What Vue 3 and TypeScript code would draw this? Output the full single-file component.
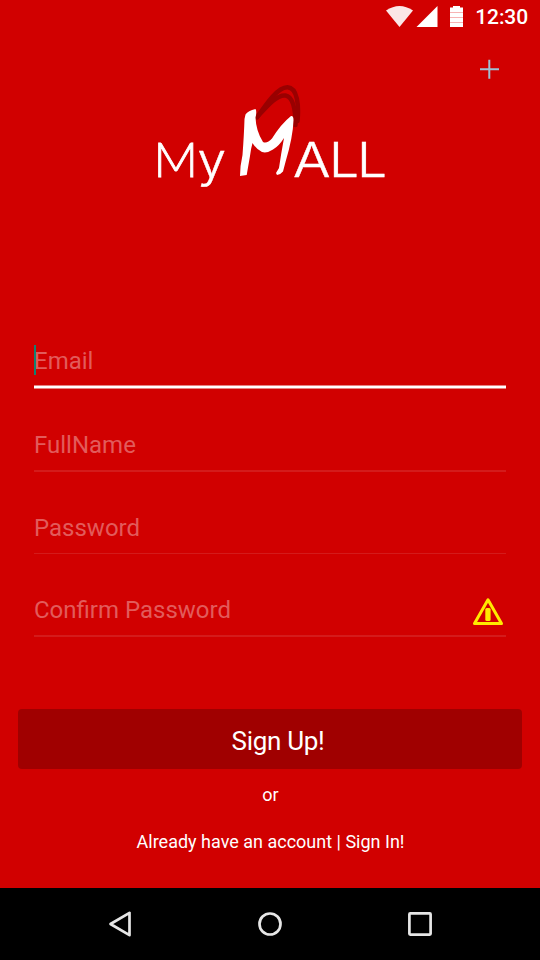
<script setup lang="ts">
import { ref } from 'vue'

interface Field {
  id: string
  label: string
  type: string
  warning?: boolean
}

const fields: Field[] = [
  { id: 'email', label: 'Email', type: 'email' },
  { id: 'name', label: 'FullName', type: 'text' },
  { id: 'password', label: 'Password', type: 'password' },
  { id: 'confirm', label: 'Confirm Password', type: 'password', warning: true },
]
const active = ref('email')
</script>

<template>
  <div class="screen">
    <header class="status">
      <svg class="signals" width="80" height="24" viewBox="384 4 80 24">
        <path d="M386 10.500Q399.500 1.500 413 10.500L399.500 27Z" fill="#fff" opacity=".9" />
        <path d="M437.500 6V27H416.500Z" fill="#fff" />
        <path d="M453 6h7v1.500h3V27H450V7.500h3Z" fill="#fff" />
        <path d="M450 12.500h13M450 17.500h13M450 22.500h13" stroke="#f7b4b4" stroke-width="1" />
      </svg>
      <span class="clock">12:30</span>
    </header>

    <div class="toolbar">
      <svg width="20" height="20" viewBox="0 0 20 20">
        <path d="M0 10.200h19M9.300 .8v19" stroke="#9fc0d4" stroke-width="2" />
      </svg>
    </div>

    <div class="brand">
      <svg width="240" height="110" viewBox="150 80 240 110" role="img">
        <g class="brand-text">
          <text class="wide" x="153.500" y="177" textLength="44.500" lengthAdjust="spacingAndGlyphs">M</text>
          <text x="197.500" y="177" textLength="28.500" lengthAdjust="spacingAndGlyphs">y</text>
          <text x="293" y="177" textLength="37.500" lengthAdjust="spacingAndGlyphs">A</text>
          <text x="329" y="177" textLength="30" lengthAdjust="spacingAndGlyphs">L</text>
          <text x="357" y="177" textLength="30" lengthAdjust="spacingAndGlyphs">L</text>
        </g>
        <g class="handles">
          <path d="M257 117.500C267 103 278 87 287.500 87.300C297.500 88 299 105 297.500 121" />
          <path d="M258 116C268 105 277 94.500 285.500 95.500C293.500 97 295.500 110 295.500 125" />
        </g>
        <path
          class="mark"
          d="M245.500 114.500Q248 110.500 255.500 109Q257 111 255.500 117.500Q256 131 263 142Q267 144 272 138.500Q281 124 291 116Q293.500 115.500 293.500 120Q293 137 285.500 162L283 171.500Q280 175 277 175L276 173L279 168Q281 154 284 138Q279 146 273 149.500Q267 153.500 262 152Q256 149 252.500 143Q251 148 250 156L246.700 175L240 176Q240 166 242.500 155Q244 135 244.500 119Z"
        />
      </svg>
    </div>

    <form class="form" @submit.prevent>
      <label
        v-for="field in fields"
        :key="field.id"
        class="field"
        :class="{ focused: active === field.id }"
      >
        <i v-if="active === field.id" class="caret"></i>
        <input :type="field.type" :placeholder="field.label" @focus="active = field.id" />
        <svg v-if="field.warning" class="warning" width="32" height="30" viewBox="472 597 32 30">
          <path d="M488 599.700L501.500 623.600H474.500Z" />
          <rect x="485.300" y="608" width="5.300" height="13" rx="1.500" />
        </svg>
      </label>
    </form>

    <button class="signup" type="button">Sign Up!</button>
    <p class="or">or</p>
    <p class="signin">Already have an account | Sign In!</p>

    <nav class="nav">
      <svg width="24" height="28" viewBox="0 0 24 28">
        <path d="M2.500 14L21.500 2.800V25.200Z" />
      </svg>
      <svg width="24" height="28" viewBox="0 0 24 28">
        <circle cx="12" cy="14" r="10.500" />
      </svg>
      <svg width="24" height="28" viewBox="0 0 24 28">
        <rect x="1.400" y="3.400" width="21.200" height="21.200" rx=".8" />
      </svg>
    </nav>
  </div>
</template>

<style>
body {
  margin: 0;
}
</style>

<style scoped>
.screen {
  box-sizing: border-box;
  width: 540px;
  height: 960px;
  display: flex;
  flex-direction: column;
  overflow: hidden;
  background: #d10000;
  color: #fff;
  font-family: Roboto, sans-serif;
}
svg {
  display: block;
}
.status {
  display: flex;
  align-items: flex-start;
  justify-content: flex-end;
  height: 32px;
  padding: 4px 12px 0 0;
  box-sizing: border-box;
}
.clock {
  width: 54px;
  margin-left: 10px;
  font-size: 21px;
  line-height: 26px;
  font-weight: 500;
  letter-spacing: -0.1px;
  text-align: right;
}
.toolbar {
  display: flex;
  justify-content: flex-end;
  height: 48px;
  padding: 27px 40px 0 0;
  box-sizing: border-box;
}
.brand {
  display: flex;
  justify-content: center;
  height: 253px;
}
.brand-text {
  fill: #fff;
  stroke: #fff;
  stroke-width: 0.4;
  font-family: Inter, sans-serif;
  font-size: 47.500px;
  font-weight: 300;
}
.wide {
  font-family: Lato, sans-serif;
  font-size: 48px;
  font-weight: 300;
  stroke-width: 0.8;
}
.handles {
  fill: none;
  stroke: #990000;
  stroke-width: 4.500;
  stroke-linecap: round;
}
.mark {
  fill: #fff;
}
.form {
  display: flex;
  flex-direction: column;
  height: 376px;
  padding: 0 34px;
}
.field {
  position: relative;
  display: flex;
  box-sizing: border-box;
  height: 82.500px;
  padding-top: 11px;
}
.field:first-child {
  height: 84px;
}
.field::after {
  content: '';
  position: absolute;
  left: 0;
  right: 0;
  top: 53px;
  height: 2px;
  background: #d41b1b;
}
.field:nth-child(3)::after {
  height: 1px;
}
.field.focused::after {
  top: 52px;
  height: 2px;
  background: #fff;
  border: solid #e88080;
  border-width: 1px 0;
}
input {
  width: 100%;
  height: 34px;
  padding: 0;
  border: 0;
  outline: 0;
  background: transparent;
  color: #fff;
  font: 24px/34px Roboto, sans-serif;
}
input::placeholder {
  color: #e25b5b;
  opacity: 1;
}
.caret {
  position: absolute;
  left: 0;
  top: 12px;
  width: 2px;
  height: 30px;
  background: #128272;
}
.warning {
  flex: none;
  margin: 4px 2px 0 0;
}
.warning path {
  fill: none;
  stroke: #ffe900;
  stroke-width: 3;
  stroke-linejoin: round;
}
.warning rect {
  fill: #ffe900;
}
.signup {
  flex: none;
  height: 60px;
  margin: 0 18px;
  padding: 3px 0 0 16px;
  border: 0;
  border-radius: 4px;
  background: #a00000;
  color: #fff;
  font: 26px/30px Roboto, sans-serif;
  letter-spacing: -0.300px;
}
.or,
.signin {
  margin: 0;
  padding-left: 1px;
  text-align: center;
  font-size: 18px;
  line-height: 24px;
}
.or {
  padding-top: 14px;
  height: 47px;
  box-sizing: border-box;
}
.signin {
  padding-top: 14px;
}
.nav {
  display: flex;
  align-items: center;
  justify-content: space-between;
  height: 72px;
  margin-top: auto;
  padding: 0 108px;
  background: #000;
}
.nav svg {
  fill: none;
  stroke: #e6e6e6;
  stroke-width: 2.700;
  stroke-linejoin: round;
}
</style>
